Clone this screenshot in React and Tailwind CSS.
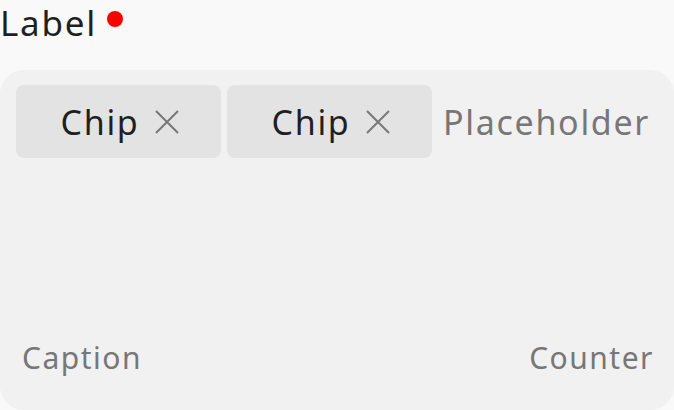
export default function App() {
  const font = { fontFamily: '"Noto Sans", sans-serif' };
  const Chip = () => (
    <div className="flex h-[73px] w-[205px] items-center justify-center gap-[16px] rounded-[8px] bg-[#e3e3e3]">
      <span className="pl-[3px] text-[34px] leading-none tracking-[0.05em] text-[#1f1f1f]">Chip</span>
      <svg width="24" height="24" viewBox="0 0 24 24" className="text-[#777]">
        <path d="M1 1 L23 23 M23 1 L1 23" stroke="currentColor" strokeWidth="2" fill="none" />
      </svg>
    </div>
  );
  return (
    <div className="h-[410px] w-[674px] overflow-hidden bg-[#f9f9f9]" style={font}>
      <div className="flex h-[48px] items-start gap-[10px] pt-[1px]">
        <span className="text-[35px] leading-[44px] tracking-[0.05em] text-[#1f1f1f]">Label</span>
        <span className="mt-[10px] h-[16px] w-[16px] rounded-full bg-[#ff0000]"></span>
      </div>
      <div className="mt-[22px] flex h-[340px] flex-col justify-between rounded-[24px] bg-[#f1f1f1] px-[16px] pt-[15px] pb-[37px]">
        <div className="flex items-center gap-[6px]">
          <Chip />
          <Chip />
          <span className="ml-[5px] text-[34px] leading-none tracking-[0.05em] text-[#777]">Placeholder</span>
        </div>
        <div className="flex justify-between pl-[6px] pr-[4px] text-[30px] leading-none tracking-[0.05em] text-[#777]">
          <span>Caption</span>
          <span>Counter</span>
        </div>
      </div>
    </div>
  );
}
